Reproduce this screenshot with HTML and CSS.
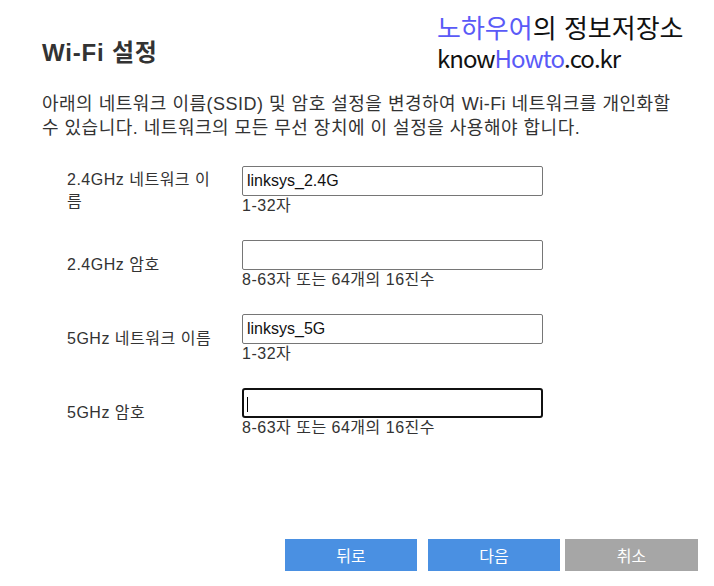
FILE: index.html
```html
<!DOCTYPE html>
<html lang="ko">
  <head>
    <meta charset="UTF-8" />
    <meta name="viewport" content="width=device-width, initial-scale=1.0" />
    <title>Wi-Fi 설정</title>
    <link rel="stylesheet" href="styles.css">
  </head>
  <body>
    <div class="watermark">
      <div class="wm-title"><span class="blue">노하우어</span>의 정보저장소</div>
      <div class="wm-site">know<span class="blue">Howto</span>.co.kr</div>
    </div>

    <div class="page">
      <h1>Wi-Fi 설정</h1>
      <p class="intro">
        아래의 네트워크 이름(SSID) 및 암호 설정을 변경하여 Wi-Fi 네트워크를 개인화할 수 있습니다. 네트워크의 모든 무선 장치에 이 설정을 사용해야 합니다.
      </p>

      <div class="form">
        <div class="row">
          <label class="label">2.4GHz 네트워크 이름</label>
          <div class="field">
            <input class="input" type="text" value="linksys_2.4G" />
            <div class="hint">1-32자</div>
          </div>
        </div>

        <div class="row">
          <label class="label">2.4GHz 암호</label>
          <div class="field">
            <input class="input" type="password" value="" />
            <div class="hint">8-63자 또는 64개의 16진수</div>
          </div>
        </div>

        <div class="row">
          <label class="label">5GHz 네트워크 이름</label>
          <div class="field">
            <input class="input" type="text" value="linksys_5G" />
            <div class="hint">1-32자</div>
          </div>
        </div>

        <div class="row">
          <label class="label">5GHz 암호</label>
          <div class="field">
            <div class="input-wrap">
              <input class="input input-active" type="password" value="" />
              <span class="caret"></span>
            </div>
            <div class="hint">8-63자 또는 64개의 16진수</div>
          </div>
        </div>
      </div>
    </div>

    <div class="buttons">
      <button class="btn btn-back">뒤로</button>
      <button class="btn btn-next">다음</button>
      <button class="btn btn-cancel">취소</button>
    </div>
  </body>
</html>
```

FILE: styles.css
```css
body {
  margin: 0;
  font-family: "Liberation Sans", "Noto Sans CJK KR", sans-serif;
  color: #333;
  background: #fff;
}

.page {
  padding: 0 42px;
}

h1 {
  margin: 38px 0 0;
  font-size: 24px;
  line-height: 30px;
  font-weight: bold;
  letter-spacing: 0.8px;
  color: #333;
}

.intro {
  margin: 24px 0 0;
  max-width: 640px;
  font-size: 18px;
  line-height: 24px;
  letter-spacing: 0.5px;
  word-break: keep-all;
}

/* watermark sits over the page corner */
.watermark {
  position: absolute;
  top: 12px;
  left: 437px;
  font-family: "Noto Sans CJK KR", sans-serif;
  color: #111;
}

.wm-title {
  font-size: 26px;
  line-height: 30px;
}

.wm-site {
  font-size: 24px;
  line-height: 31px;
  letter-spacing: -1px;
}

.watermark .blue {
  color: #5a5af7;
}

.form {
  margin-top: 26px;
  padding-left: 25px;
  display: flex;
  flex-direction: column;
  gap: 24px;
}

.row {
  display: flex;
  align-items: center;
  gap: 25px;
}

.label {
  width: 150px;
  font-size: 16px;
  line-height: 22px;
  letter-spacing: 0.5px;
}

.field {
  display: flex;
  flex-direction: column;
}

.input-wrap {
  position: relative;
}

.input {
  box-sizing: border-box;
  width: 301px;
  height: 30px;
  margin: 0;
  padding: 0 4px;
  border: 1px solid #767676;
  border-radius: 2px;
  font-family: "Liberation Sans", sans-serif;
  font-size: 16px;
  color: #111;
  outline: none;
}

.input-active {
  border: 2px solid #111;
  border-radius: 3px;
}

.caret {
  position: absolute;
  left: 5px;
  top: 9px;
  width: 1px;
  height: 15px;
  background: #000;
}

.hint {
  font-size: 16px;
  line-height: 20px;
  letter-spacing: 0.5px;
}

.buttons {
  display: flex;
  justify-content: flex-end;
  margin-top: 101px;
  padding-right: 16px;
}

.btn {
  width: 132px;
  height: 32px;
  border: none;
  border-radius: 0;
  padding: 0;
  font-family: "Noto Sans CJK KR", sans-serif;
  font-size: 16px;
  color: #fff;
  background: #4a90e2;
}

.btn-next {
  margin-left: 11px;
}

.btn-cancel {
  width: 133px;
  margin-left: 5px;
  background: #a6a6a6;
}
```
